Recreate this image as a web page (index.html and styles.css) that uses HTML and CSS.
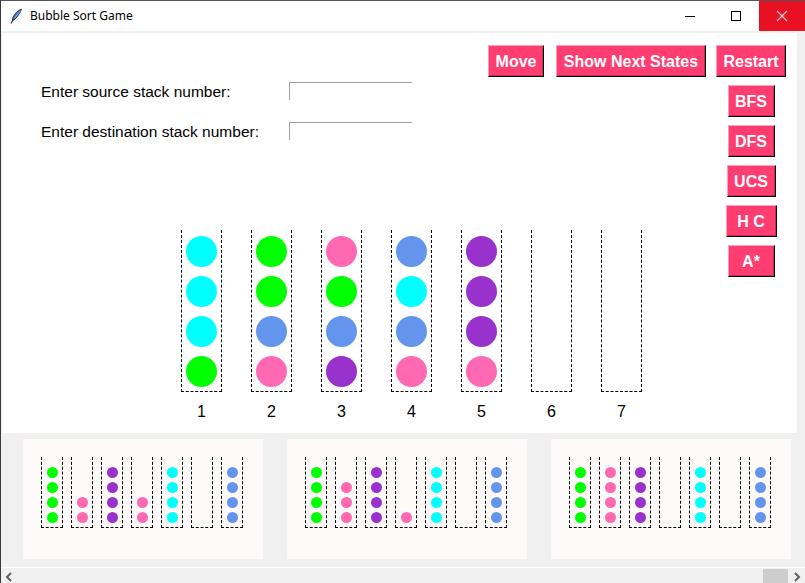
FILE: index.html
```html
<!DOCTYPE html>
<html>
<head>
<meta charset="utf-8">
<title>Bubble Sort Game</title>
<link rel="stylesheet" href="styles.css">
</head>
<body>
<div class="window">
  <div class="titlebar">
    <svg class="app-icon" width="16" height="16" viewBox="0 0 16 16">
      <path d="M13.5 1.2 C10.5 2 7 5 5.2 9 C4.6 10.4 4.4 11.6 4.6 12.4 C5.6 12.2 6.8 11.4 8 10 C10.6 7 12.6 4 13.5 1.2 Z" fill="#3f74c8" stroke="#1b2a4a" stroke-width="0.9"/>
      <path d="M12.2 3 L6 10.6" stroke="#9cc0f0" stroke-width="0.8"/>
      <path d="M5.4 11.2 L3.2 15" stroke="#1b2a4a" stroke-width="1.2" stroke-linecap="round"/>
    </svg>
    <span class="title">Bubble Sort Game</span>
    <div class="controls">
      <div class="ctl"><svg width="12" height="12" viewBox="0 0 12 12"><path d="M1 6.5 H11" stroke="#000" stroke-width="1"/></svg></div>
      <div class="ctl"><svg width="12" height="12" viewBox="0 0 12 12"><rect x="1.5" y="1.5" width="9" height="9" fill="none" stroke="#000" stroke-width="1"/></svg></div>
      <div class="ctl close"><svg width="12" height="12" viewBox="0 0 12 12"><path d="M1 1 L11 11 M11 1 L1 11" stroke="#f7d0d3" stroke-width="1.1"/></svg></div>
    </div>
  </div>

  <div class="main">
    <div class="canvas">
      <div class="left">
        <div class="toprow">
          <button class="btn w-move">Move</button>
          <button class="btn w-next">Show Next States</button>
        </div>
        <div class="form">
          <div class="field"><span class="label">Enter source stack number:</span><span class="entry"></span></div>
          <div class="field"><span class="label">Enter destination stack number:</span><span class="entry"></span></div>
        </div>
        <div class="stacks">
          <div class="stack-col">
            <div class="stack"><span class="ball cy"></span><span class="ball cy"></span><span class="ball cy"></span><span class="ball gr"></span></div>
            <div class="num">1</div>
          </div>
          <div class="stack-col">
            <div class="stack"><span class="ball gr"></span><span class="ball gr"></span><span class="ball bl"></span><span class="ball pk"></span></div>
            <div class="num">2</div>
          </div>
          <div class="stack-col">
            <div class="stack"><span class="ball pk"></span><span class="ball gr"></span><span class="ball bl"></span><span class="ball pu"></span></div>
            <div class="num">3</div>
          </div>
          <div class="stack-col">
            <div class="stack"><span class="ball bl"></span><span class="ball cy"></span><span class="ball bl"></span><span class="ball pk"></span></div>
            <div class="num">4</div>
          </div>
          <div class="stack-col">
            <div class="stack"><span class="ball pu"></span><span class="ball pu"></span><span class="ball pu"></span><span class="ball pk"></span></div>
            <div class="num">5</div>
          </div>
          <div class="stack-col">
            <div class="stack"></div>
            <div class="num">6</div>
          </div>
          <div class="stack-col">
            <div class="stack"></div>
            <div class="num">7</div>
          </div>
        </div>
      </div>
      <div class="right">
        <button class="btn w-restart">Restart</button>
        <button class="btn w-algo">BFS</button>
        <button class="btn w-algo">DFS</button>
        <button class="btn w-ucs">UCS</button>
        <button class="btn w-hc">H C</button>
        <button class="btn w-algo">A*</button>
      </div>
    </div>
    <div class="vstrip"></div>
  </div>

  <div class="tray">
    <div class="panel">
      <div class="mini"><span class="dot gr"></span><span class="dot gr"></span><span class="dot gr"></span><span class="dot gr"></span></div>
      <div class="mini"><span class="dot pk"></span><span class="dot pk"></span></div>
      <div class="mini"><span class="dot pu"></span><span class="dot pu"></span><span class="dot pu"></span><span class="dot pu"></span></div>
      <div class="mini"><span class="dot pk"></span><span class="dot pk"></span></div>
      <div class="mini"><span class="dot cy"></span><span class="dot cy"></span><span class="dot cy"></span><span class="dot cy"></span></div>
      <div class="mini"></div>
      <div class="mini"><span class="dot bl"></span><span class="dot bl"></span><span class="dot bl"></span><span class="dot bl"></span></div>
    </div>
    <div class="panel">
      <div class="mini"><span class="dot gr"></span><span class="dot gr"></span><span class="dot gr"></span><span class="dot gr"></span></div>
      <div class="mini"><span class="dot pk"></span><span class="dot pk"></span><span class="dot pk"></span></div>
      <div class="mini"><span class="dot pu"></span><span class="dot pu"></span><span class="dot pu"></span><span class="dot pu"></span></div>
      <div class="mini"><span class="dot pk"></span></div>
      <div class="mini"><span class="dot cy"></span><span class="dot cy"></span><span class="dot cy"></span><span class="dot cy"></span></div>
      <div class="mini"></div>
      <div class="mini"><span class="dot bl"></span><span class="dot bl"></span><span class="dot bl"></span><span class="dot bl"></span></div>
    </div>
    <div class="panel">
      <div class="mini"><span class="dot gr"></span><span class="dot gr"></span><span class="dot gr"></span><span class="dot gr"></span></div>
      <div class="mini"><span class="dot pk"></span><span class="dot pk"></span><span class="dot pk"></span><span class="dot pk"></span></div>
      <div class="mini"><span class="dot pu"></span><span class="dot pu"></span><span class="dot pu"></span><span class="dot pu"></span></div>
      <div class="mini"></div>
      <div class="mini"><span class="dot cy"></span><span class="dot cy"></span><span class="dot cy"></span><span class="dot cy"></span></div>
      <div class="mini"></div>
      <div class="mini"><span class="dot bl"></span><span class="dot bl"></span><span class="dot bl"></span><span class="dot bl"></span></div>
    </div>
  </div>

  <div class="hscroll">
    <svg class="arrow" width="8" height="10" viewBox="0 0 8 10"><path d="M6 1 L2 5 L6 9" fill="none" stroke="#606060" stroke-width="2"/></svg>
    <div class="track"><div class="thumb"></div></div>
    <svg class="arrow" width="8" height="10" viewBox="0 0 8 10"><path d="M2 1 L6 5 L2 9" fill="none" stroke="#606060" stroke-width="2"/></svg>
  </div>
</div>
</body>
</html>
```

FILE: styles.css
```css
* { box-sizing: border-box; }

html, body {
  margin: 0;
  padding: 0;
}

body {
  width: 805px;
  height: 583px;
  overflow: hidden;
  background: #f0f0f0;
  font-family: "Liberation Sans", Arial, sans-serif;
}

.window {
  width: 805px;
  height: 583px;
  border-left: 1px solid #3a3a3a;
  display: flex;
  flex-direction: column;
}

/* title bar */
.titlebar {
  height: 31px;
  flex: none;
  background: #fff;
  border-top: 1px solid #555;
  display: flex;
  align-items: center;
  margin-bottom: 2px;
}

.app-icon {
  margin-left: 7px;
  margin-right: 6px;
}

.title {
  font-family: "Noto Sans", "Liberation Sans", sans-serif;
  font-size: 12px;
  color: #000;
  margin-top: -1px;
}

.controls {
  margin-left: auto;
  display: flex;
  height: 30px;
  align-self: flex-start;
}

.ctl {
  width: 46px;
  height: 30px;
  display: flex;
  align-items: center;
  justify-content: center;
}

.ctl.close {
  background: #e81123;
}

/* main canvas */
.main {
  display: flex;
  height: 400px;
  flex: none;
}

.canvas {
  width: 795px;
  margin-left: 1px;
  background: #fff;
  display: flex;
  padding: 12px 11px 0 0;
}

.vstrip {
  flex: 1;
  background: #f0f0f0;
}

.left {
  flex: 1;
  display: flex;
  flex-direction: column;
}

.right {
  width: 70px;
  margin-left: 10px;
  display: flex;
  flex-direction: column;
  align-items: center;
  gap: 8px;
}

.toprow {
  display: flex;
  justify-content: flex-end;
  gap: 12px;
}

.btn {
  height: 32px;
  padding: 1px 0 0 0;
  margin: 0;
  background: #ff3d71;
  color: #fff;
  font-family: "Liberation Sans", Arial, sans-serif;
  font-weight: bold;
  font-size: 16px;
  line-height: 29px;
  text-align: center;
  border-style: solid;
  border-width: 1px;
  border-color: #ff9fbb #000 #000 #ff9fbb;
  box-shadow: inset -1px -1px 0 #c72c57;
  white-space: nowrap;
}

.w-move { width: 56px; }
.w-next { width: 150px; }
.w-restart { width: 70px; }
.w-algo { width: 47px; }
.w-ucs { width: 49px; }
.w-hc { width: 51px; }

/* form */
.form {
  margin-top: 5px;
  padding-left: 39px;
  display: flex;
  flex-direction: column;
  gap: 22px;
}

.field {
  display: flex;
  align-items: center;
  height: 18px;
}

.label {
  width: 248px;
  font-size: 15.5px;
  line-height: 18px;
  padding-top: 2px;
  color: #000;
  white-space: nowrap;
}

.entry {
  width: 123px;
  height: 18px;
  border-top: 1px solid #a0a0a0;
  border-left: 1px solid #a0a0a0;
  background: #fff;
}

/* stacks */
.stacks {
  margin-top: 90px;
  padding-left: 179px;
  display: flex;
  gap: 29px;
}

.stack-col {
  width: 41px;
  display: flex;
  flex-direction: column;
  align-items: center;
}

.stack {
  width: 41px;
  height: 162px;
  border-left: 1px dashed #000;
  border-right: 1px dashed #000;
  border-bottom: 1px dashed #000;
  display: flex;
  flex-direction: column;
  justify-content: flex-end;
  align-items: center;
  gap: 9px;
  padding-bottom: 4px;
}

.ball {
  width: 31px;
  height: 31px;
  border-radius: 50%;
  flex: none;
}

.num {
  margin-top: 11px;
  font-size: 16px;
  line-height: 18px;
  color: #000;
}

.cy { background: #00ffff; }
.gr { background: #00ff00; }
.pk { background: #ff69b4; }
.bl { background: #6495ed; }
.pu { background: #9932cc; }

/* tray of next states */
.tray {
  height: 135px;
  flex: none;
  background: #f0f0f0;
  padding: 6px 0 0 22px;
  display: flex;
  gap: 24px;
  border-bottom: 1px solid #fff;
}

.panel {
  width: 240px;
  height: 120px;
  background: #fffafa;
  padding: 18px 0 0 18px;
  display: flex;
  gap: 8px;
  align-items: flex-start;
}

.mini {
  width: 22px;
  height: 71px;
  border-left: 1px dashed #000;
  border-right: 1px dashed #000;
  border-bottom: 1px dashed #000;
  display: flex;
  flex-direction: column;
  justify-content: flex-end;
  align-items: center;
  gap: 4px;
  padding-bottom: 4px;
}

.dot {
  width: 11px;
  height: 11px;
  border-radius: 50%;
  flex: none;
}

/* horizontal scrollbar */
.hscroll {
  height: 17px;
  flex: none;
  background: #f0f0f0;
  display: flex;
  align-items: flex-start;
}

.arrow {
  margin-top: 4px;
  margin-left: 4px;
  margin-right: 4px;
}

.track {
  flex: 1;
  height: 17px;
  padding-top: 1px;
  display: flex;
  justify-content: flex-end;
}

.thumb {
  width: 25px;
  height: 16px;
  background: #cdcdcd;
  margin-right: 1px;
}
```
